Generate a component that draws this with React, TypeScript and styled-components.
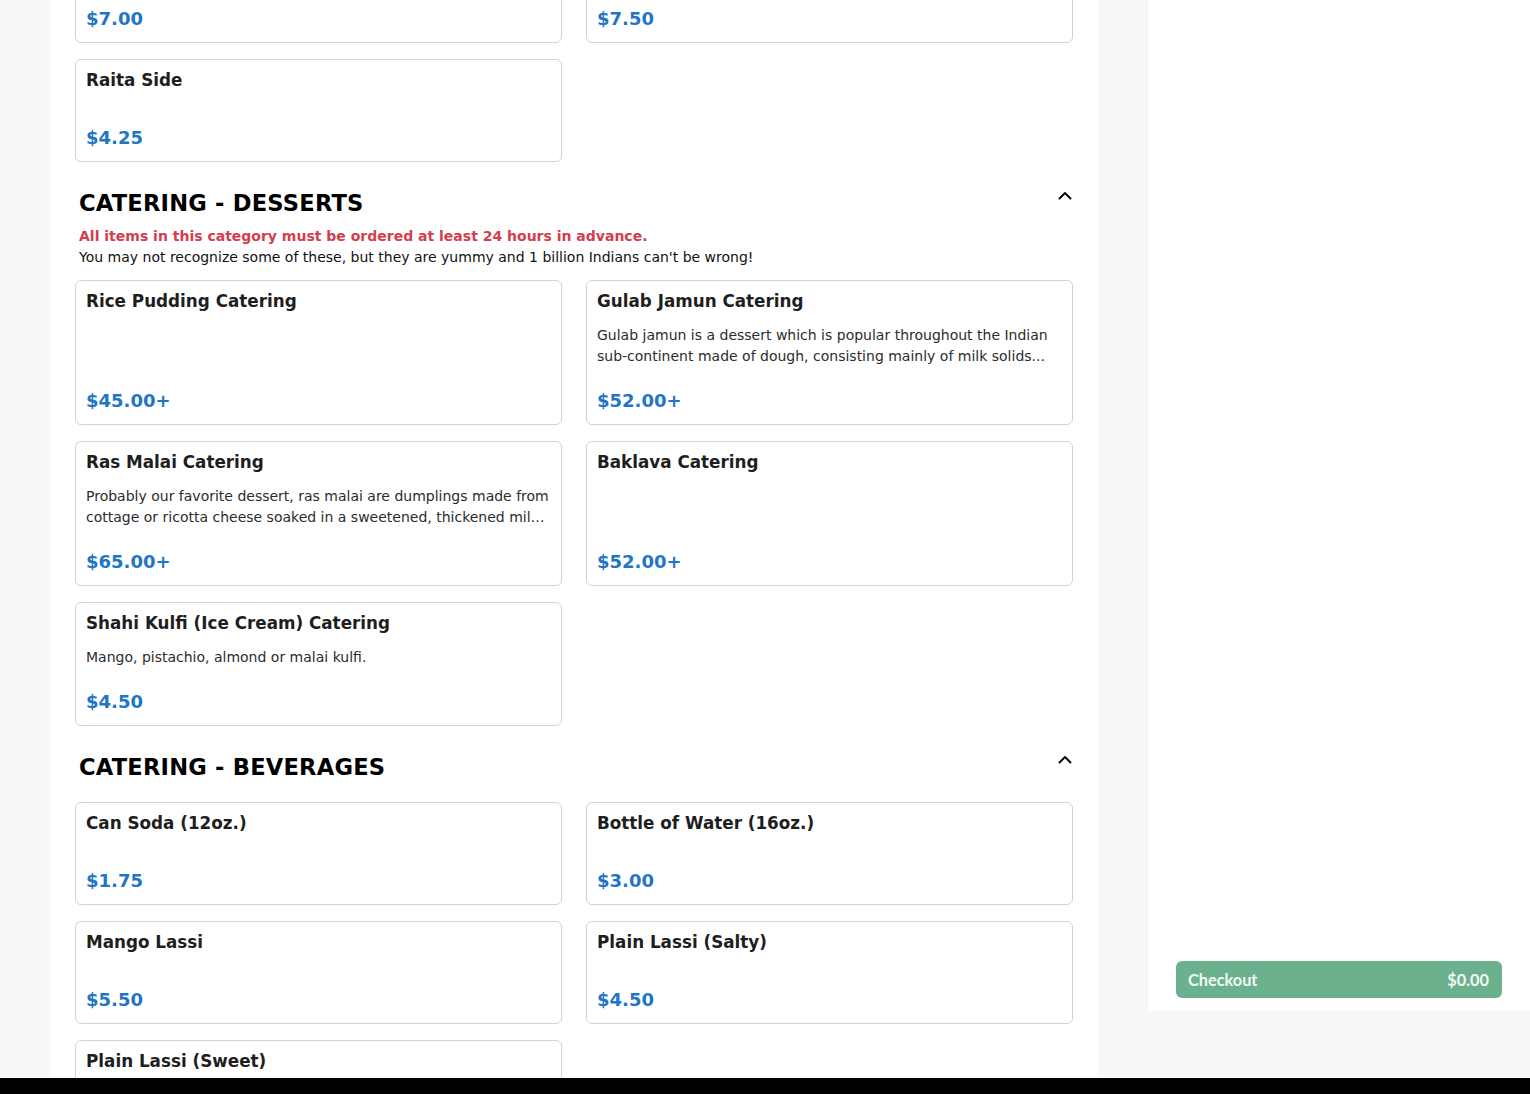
import React from "react";
import styled, { createGlobalStyle } from "styled-components";

const GlobalStyle = createGlobalStyle`
  html, body { margin: 0; padding: 0; }
  body {
    background: #f8f8f8;
    font-family: "DejaVu Sans", sans-serif;
    overflow: hidden;
  }
  * { box-sizing: border-box; }
`;

const Page = styled.div`
  height: 100vh;
  display: flex;
  flex-direction: column;
`;

const Body = styled.div`
  flex: 1;
  min-height: 0;
  display: flex;
  align-items: flex-start;
  padding-left: 50px;
  gap: 49px;
  overflow: hidden;
`;

const MenuPanel = styled.main`
  width: 1048px;
  height: 100%;
  background: #ffffff;
  overflow: hidden;
  padding: 0 25px;
`;

const Scrolled = styled.div`
  margin-top: -60px;
`;

const Section = styled.section<{ $first?: boolean }>`
  display: flex;
  flex-direction: column;
  padding-top: ${(p) => (p.$first ? "0" : "27px")};
`;

const SectionHead = styled.div`
  display: flex;
  align-items: center;
  justify-content: space-between;
  padding: 0 0 0 4px;
  margin-bottom: 9px;
`;

const SectionTitle = styled.h2`
  margin: 0;
  font-size: 22.6px;
  line-height: 28px;
  font-weight: 700;
  color: #000;
  letter-spacing: 0.2px;
`;

const Toggle = styled.button`
  border: 0;
  background: none;
  padding: 0;
  margin: -16px 0 0 0;
  width: 16px;
  height: 10px;
  display: flex;
  align-items: center;
  justify-content: center;
  cursor: pointer;
`;

const Info = styled.div`
  padding: 0 4px;
`;

const Note = styled.p`
  margin: 0;
  font-size: 14px;
  line-height: 21px;
  font-weight: 700;
  color: #d23e4e;
`;

const Blurb = styled.p`
  margin: 0;
  font-size: 14px;
  line-height: 21px;
  color: #111;
`;

const Grid = styled.div<{ $top?: boolean }>`
  display: grid;
  grid-template-columns: 1fr 1fr;
  column-gap: 24px;
  row-gap: 16px;
  margin-top: ${(p) => (p.$top ? "0" : "12px")};
`;

const Card = styled.div`
  border: 1px solid #d2d2d2;
  border-radius: 6px;
  padding: 10px 10px 11px;
  display: flex;
  flex-direction: column;
  background: #fff;
`;

const ItemName = styled.h3`
  margin: 0;
  font-size: 16.8px;
  line-height: 20px;
  font-weight: 700;
  color: #1e1e1e;
`;

const ItemDesc = styled.p`
  flex: 1 0 auto;
  margin: 14px 0 0;
  font-size: 14px;
  line-height: 21px;
  color: #2c2c2c;
`;

const Clamp = styled.span`
  display: -webkit-box;
  -webkit-line-clamp: 2;
  -webkit-box-orient: vertical;
  overflow: hidden;
`;

const Price = styled.div`
  margin-top: 22px;
  font-size: 18px;
  line-height: 24px;
  font-weight: 700;
  color: #1f76c5;
`;

const Sidebar = styled.aside`
  width: 383px;
  height: 1010px;
  background: #fff;
  border-left: 1px solid #efefef;
  display: flex;
  flex-direction: column;
  justify-content: flex-end;
  padding: 0 28px 12px 28px;
`;

const CheckoutButton = styled.button`
  height: 37px;
  width: 100%;
  border: 0;
  border-radius: 6px;
  background: #6bb18e;
  color: #f3faf6;
  display: flex;
  align-items: center;
  justify-content: space-between;
  padding: 0 13px 0 12px;
  font-family: "Lato", "Open Sans", sans-serif;
  font-weight: 700;
  font-size: 16.3px;
  cursor: pointer;
`;

const BottomBar = styled.div`
  height: 16px;
  background: #000;
  flex-shrink: 0;
`;

type Item = { name: string; price: string; desc?: string };

type Cat = {
  title?: string;
  note?: string;
  blurb?: string;
  items: Item[];
};

const cats: Cat[] = [
  {
    items: [
      { name: "Basmati Rice Side", price: "$7.00" },
      { name: "Mint Chutney Side", price: "$7.50" },
      { name: "Raita Side", price: "$4.25" },
    ],
  },
  {
    title: "CATERING - DESSERTS",
    note: "All items in this category must be ordered at least 24 hours in advance.",
    blurb:
      "You may not recognize some of these, but they are yummy and 1 billion Indians can't be wrong!",
    items: [
      { name: "Rice Pudding Catering", price: "$45.00+" },
      {
        name: "Gulab Jamun Catering",
        price: "$52.00+",
        desc:
          "Gulab jamun is a dessert which is popular throughout the Indian sub-continent made of dough, consisting mainly of milk solids...",
      },
      {
        name: "Ras Malai Catering",
        price: "$65.00+",
        desc:
          "Probably our favorite dessert, ras malai are dumplings made from cottage or ricotta cheese soaked in a sweetened, thickened milk delicately flavored with cardamom.",
      },
      { name: "Baklava Catering", price: "$52.00+" },
      {
        name: "Shahi Kulfi (Ice Cream) Catering",
        price: "$4.50",
        desc: "Mango, pistachio, almond or malai kulfi.",
      },
    ],
  },
  {
    title: "CATERING - BEVERAGES",
    items: [
      { name: "Can Soda (12oz.)", price: "$1.75" },
      { name: "Bottle of Water (16oz.)", price: "$3.00" },
      { name: "Mango Lassi", price: "$5.50" },
      { name: "Plain Lassi (Salty)", price: "$4.50" },
      { name: "Plain Lassi (Sweet)", price: "$4.50" },
    ],
  },
];

const ChevronUp = () => (
  <svg width="14" height="9" viewBox="0 0 14 9" fill="none">
    <path
      d="M1.5 7.5 L7 2 L12.5 7.5"
      stroke="#000"
      strokeWidth="1.9"
      strokeLinecap="round"
      strokeLinejoin="round"
    />
  </svg>
);

const ItemCard = ({ item }: { item: Item }) => (
  <Card>
    <ItemName>{item.name}</ItemName>
    <ItemDesc>{item.desc ? <Clamp>{item.desc}</Clamp> : null}</ItemDesc>
    <Price>{item.price}</Price>
  </Card>
);

export default function App() {
  return (
    <>
      <GlobalStyle />
      <Page>
        <Body>
          <MenuPanel>
            <Scrolled>
              {cats.map((c, i) => (
                <Section key={i} $first={!c.title}>
                  {c.title && (
                    <SectionHead>
                      <SectionTitle>{c.title}</SectionTitle>
                      <Toggle aria-label="Collapse">
                        <ChevronUp />
                      </Toggle>
                    </SectionHead>
                  )}
                  {(c.note || c.blurb) && (
                    <Info>
                      {c.note && <Note>{c.note}</Note>}
                      {c.blurb && <Blurb>{c.blurb}</Blurb>}
                    </Info>
                  )}
                  <Grid $top={!c.title}>
                    {c.items.map((it) => (
                      <ItemCard key={it.name} item={it} />
                    ))}
                  </Grid>
                </Section>
              ))}
            </Scrolled>
          </MenuPanel>
          <Sidebar>
            <CheckoutButton>
              <span>Checkout</span>
              <span>$0.00</span>
            </CheckoutButton>
          </Sidebar>
        </Body>
        <BottomBar />
      </Page>
    </>
  );
}
